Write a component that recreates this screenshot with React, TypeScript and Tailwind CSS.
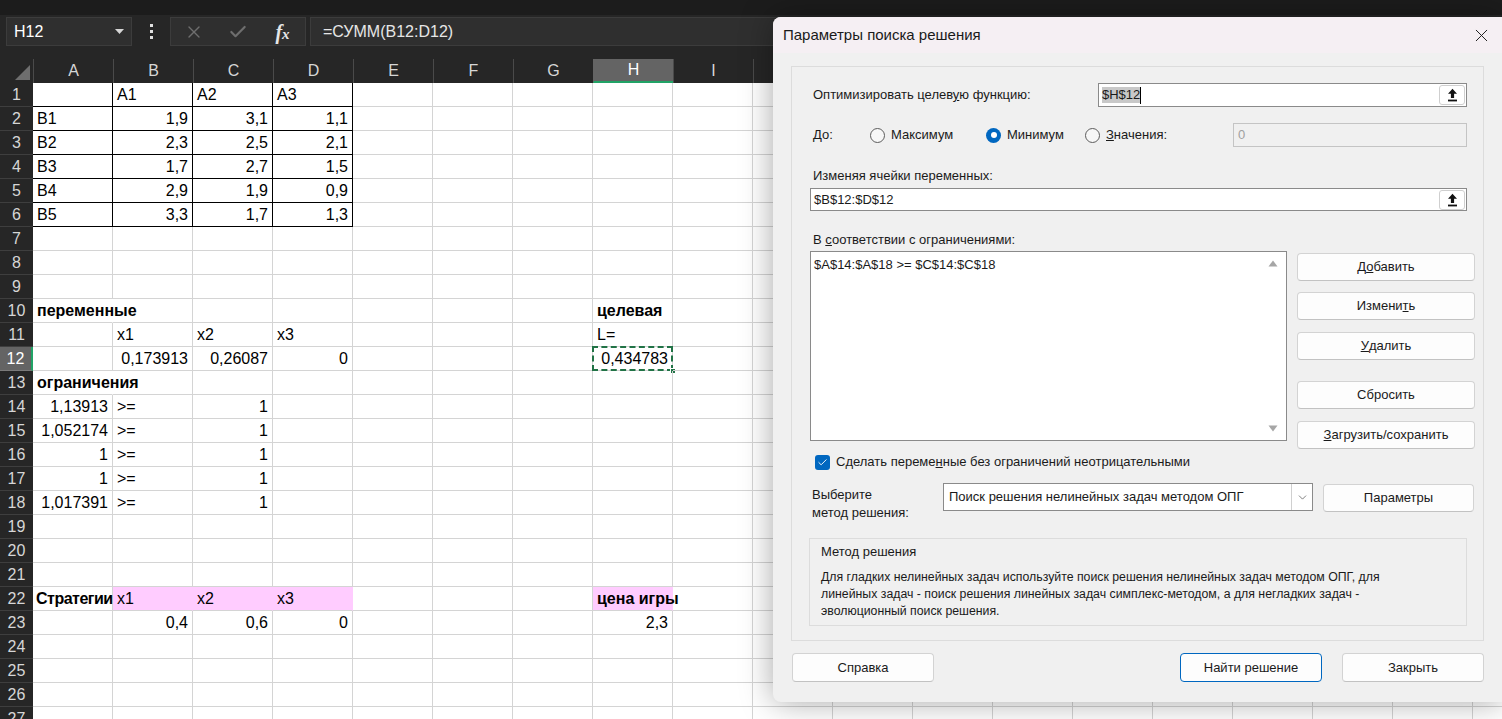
import React from 'react'
import { X, Check, ChevronDown } from 'lucide-react'

const COLS = 'ABCDEFGHIJKLMNOPQRS'.split('')
const ROWS = 27

type Cell = { v: string; right?: boolean; bold?: boolean; pink?: boolean; spill?: boolean; tight?: boolean }

const cells: Record<string, Cell> = {
  B1: { v: 'A1' }, C1: { v: 'A2' }, D1: { v: 'A3' },
  A2: { v: 'B1' }, B2: { v: '1,9', right: true }, C2: { v: '3,1', right: true }, D2: { v: '1,1', right: true },
  A3: { v: 'B2' }, B3: { v: '2,3', right: true }, C3: { v: '2,5', right: true }, D3: { v: '2,1', right: true },
  A4: { v: 'B3' }, B4: { v: '1,7', right: true }, C4: { v: '2,7', right: true }, D4: { v: '1,5', right: true },
  A5: { v: 'B4' }, B5: { v: '2,9', right: true }, C5: { v: '1,9', right: true }, D5: { v: '0,9', right: true },
  A6: { v: 'B5' }, B6: { v: '3,3', right: true }, C6: { v: '1,7', right: true }, D6: { v: '1,3', right: true },
  A10: { v: 'переменные', bold: true, spill: true }, H10: { v: 'целевая', bold: true },
  B11: { v: 'x1' }, C11: { v: 'x2' }, D11: { v: 'x3' }, H11: { v: 'L=' },
  B12: { v: '0,173913', right: true }, C12: { v: '0,26087', right: true }, D12: { v: '0', right: true },
  H12: { v: '0,434783', right: true },
  A13: { v: 'ограничения', bold: true, spill: true },
  A14: { v: '1,13913', right: true }, B14: { v: '>=' }, C14: { v: '1', right: true },
  A15: { v: '1,052174', right: true }, B15: { v: '>=' }, C15: { v: '1', right: true },
  A16: { v: '1', right: true }, B16: { v: '>=' }, C16: { v: '1', right: true },
  A17: { v: '1', right: true }, B17: { v: '>=' }, C17: { v: '1', right: true },
  A18: { v: '1,017391', right: true }, B18: { v: '>=' }, C18: { v: '1', right: true },
  A22: { v: 'Стратегии', bold: true, tight: true },
  B22: { v: 'x1', pink: true }, C22: { v: 'x2', pink: true }, D22: { v: 'x3', pink: true },
  H22: { v: 'цена игры', bold: true, pink: true },
  B23: { v: '0,4', right: true }, C23: { v: '0,6', right: true }, D23: { v: '0', right: true },
  H23: { v: '2,3', right: true },
}

function GridCell({ col, row }: { col: string; row: number }) {
  const c = cells[col + row]
  const ci = COLS.indexOf(col)
  const boxed = row <= 6 && ci <= 3
  let cls = 'border-r border-b border-[#d4d4d4]'
  if (boxed) cls = 'border-r border-b border-black'
  else if (c?.pink) cls = 'border-r border-b border-b-[#d4d4d4] border-r-[#ffccff] bg-[#ffccff]'
  else if (c?.spill) cls = 'border-r border-b border-b-[#d4d4d4] border-r-transparent'
  const selected = col === 'H' && row === 12
  return (
    <div
      className={`relative w-[80px] h-[24px] shrink-0 leading-[23px] whitespace-nowrap text-[16px] text-black ${cls} ${
        c?.right ? 'text-right' : 'text-left'
      } ${c?.bold ? 'font-bold' : ''} ${c?.tight ? 'pl-[3px] pr-0 tracking-[-0.5px] z-10' : 'px-[4px]'}`}
    >
      {c?.v}
      {selected && (
        <>
          <div className="absolute -left-[1px] -top-[1px] -right-[1px] -bottom-[1px] border-2 border-dashed border-[#217346] pointer-events-none" />
          <div className="absolute -right-[4px] -bottom-[4px] w-[6px] h-[6px] bg-[#217346] border border-white" />
        </>
      )}
    </div>
  )
}

function UploadBtn() {
  return (
    <div className="w-[26px] h-[20px] mr-[1px] bg-white border border-[#cfcfcf] rounded-[3px] flex items-center justify-center">
      <svg width="11" height="14" viewBox="0 0 11 14">
        <path d="M5.5 0.8 L1 5.8 H3.9 V10 H7.1 V5.8 H10 Z" fill="#111" />
        <rect x="1" y="11.6" width="9" height="1.8" fill="#111" />
      </svg>
    </div>
  )
}

function Radio({ checked, children, w }: { checked?: boolean; children: React.ReactNode; w: string }) {
  return (
    <div className={`flex items-center gap-[6px] ${w}`}>
      {checked ? (
        <span className="w-[15px] h-[15px] rounded-full bg-[#0067c0] flex items-center justify-center">
          <span className="w-[6px] h-[6px] rounded-full bg-white" />
        </span>
      ) : (
        <span className="w-[15px] h-[15px] rounded-full border border-[#5c5c5c] bg-[#f7f7f7]" />
      )}
      <span>{children}</span>
    </div>
  )
}

function Btn({ children, className = '', primary }: { children: React.ReactNode; className?: string; primary?: boolean }) {
  return (
    <div
      className={`h-[28px] flex items-center justify-center rounded-[4px] bg-[#fdfdfd] border ${
        primary ? 'border-[#0067c0]' : 'border-[#d3d3d3] border-b-[#c2c2c2]'
      } ${className}`}
    >
      {children}
    </div>
  )
}

function SolverDialog() {
  return (
    <div className="absolute left-[773px] top-[17px] w-[729px] h-[685px] rounded-tl-[8px] rounded-bl-[8px] bg-[#f0f0f0] shadow-[0_0_32px_rgba(0,0,0,0.35)] flex flex-col text-[13px] text-[#1a1a1a] font-['Liberation_Sans',sans-serif]">
      <div className="h-[36px] shrink-0 flex items-center justify-between pl-[10px] pr-[10px] rounded-tl-[8px] bg-[#f5eff3] text-[15px]">
        <span>Параметры поиска решения</span>
        <X size={21} strokeWidth={1.1} color="#1a1a1a" />
      </div>

      <div className="px-[18px] pt-[13px]">
        <div className="w-[693px] h-[575px] border border-[#dcdcdc] pl-[21px] flex flex-col">
          {/* target cell */}
          <div className="mt-[16px] h-[24px] flex items-center">
            <span className="w-[285px]">
              Оптимизировать целев<u>у</u>ю функцию:
            </span>
            <div className="w-[369px] h-[24px] bg-white border border-[#8a8a8a] flex items-center justify-between pl-[3px]">
              <span className="flex items-center">
                <span className="bg-[#c8c8c8] leading-[16px]">$H$12</span>
                <span className="w-[1px] h-[17px] bg-black" />
              </span>
              <UploadBtn />
            </div>
          </div>

          {/* to */}
          <div className="mt-[16px] h-[24px] flex items-center">
            <span className="w-[57px]">До:</span>
            <Radio w="w-[116px]">Максимум</Radio>
            <Radio w="w-[99px]" checked>
              Минимум
            </Radio>
            <Radio w="w-[148px]">
              <u>З</u>начения:
            </Radio>
            <div className="w-[234px] h-[24px] border border-[#c4c4c4] bg-[#f0f0f0] flex items-center pl-[4px] text-[#a0a0a0]">
              0
            </div>
          </div>

          {/* variables */}
          <div className="mt-[21px] leading-[16px]">Изменяя ячейки переменных:</div>
          <div className="mt-[4px] -ml-[3px] w-[657px] h-[23px] bg-white border border-[#8a8a8a] flex items-center justify-between pl-[3px]">
            <span>$B$12:$D$12</span>
            <UploadBtn />
          </div>

          {/* constraints */}
          <div className="mt-[21px] leading-[16px]">
            В <u>с</u>оответствии с ограничениями:
          </div>
          <div className="mt-[3px] -ml-[3px] flex">
            <div className="relative w-[477px] h-[190px] bg-white border border-[#8a8a8a] pl-[3px] pt-[3px]">
              <span>$A$14:$A$18 &gt;= $C$14:$C$18</span>
              <svg className="absolute right-[8px] top-[8px]" width="10" height="7" viewBox="0 0 10 7">
                <path d="M5 0.5 L9.5 6.5 H0.5 Z" fill="#a6a6a6" />
              </svg>
              <svg className="absolute right-[8px] bottom-[8px]" width="10" height="7" viewBox="0 0 10 7">
                <path d="M0.5 0.5 H9.5 L5 6.5 Z" fill="#a6a6a6" />
              </svg>
            </div>
            <div className="ml-[10px] pt-[2px] w-[178px] flex flex-col">
              <Btn>
                Д<u>о</u>бавить
              </Btn>
              <Btn className="mt-[11px]">
                Измени<u>т</u>ь
              </Btn>
              <Btn className="mt-[12px]">
                <u>У</u>далить
              </Btn>
              <Btn className="mt-[21px]">Сбросить</Btn>
              <Btn className="mt-[12px]">
                <u>З</u>агрузить/сохранить
              </Btn>
            </div>
          </div>

          {/* non-negative */}
          <div className="mt-[5px] h-[16px] flex items-center gap-[6px] pl-[2px]">
            <span className="w-[15px] h-[15px] rounded-[3px] bg-[#0067c0] flex items-center justify-center">
              <Check size={11} strokeWidth={2} color="#fff" />
            </span>
            <span>
              Сделать переме<u>н</u>ные без ограничений неотрицательными
            </span>
          </div>

          {/* method */}
          <div className="mt-[13px] flex items-start">
            <div className="w-[131px] -ml-[1px] pt-[3px] leading-[18px]">
              Выберите
              <br />
              метод решения:
            </div>
            <div className="w-[370px] h-[28px] bg-white border border-[#8a8a8a] flex items-center justify-between pl-[5px]">
              <span>Поиск решения нелинейных задач методом ОПГ</span>
              <div className="h-full flex items-center border-l border-[#d0d0d0] w-[21px] justify-center">
                <ChevronDown size={13} strokeWidth={1.25} color="#444" />
              </div>
            </div>
            <Btn className="ml-[10px] mt-[1px] w-[151px]">Параметры</Btn>
          </div>

          <div className="mt-[16px] -ml-[4px] w-[658px] h-[88px] border border-[#dcdcdc] pl-[11px] pt-[4px] leading-[17px]">
            <div>Метод решения</div>
            <div className="mt-[9px] whitespace-nowrap text-[12.3px]">
              Для гладких нелинейных задач используйте поиск решения нелинейных задач методом ОПГ, для
              <br />
              линейных задач - поиск решения линейных задач симплекс-методом, а для негладких задач -
              <br />
              эволюционный поиск решения.
            </div>
          </div>
        </div>

        <div className="mt-[12px] flex">
          <Btn className="ml-[1px] w-[142px] h-[29px]">Справка</Btn>
          <Btn primary className="ml-[246px] w-[142px] h-[29px]">
            Найти решение
          </Btn>
          <Btn className="ml-[20px] w-[142px] h-[29px]">Закрыть</Btn>
        </div>
      </div>
    </div>
  )
}

export default function App() {
  return (
    <div className="relative w-[1502px] h-[719px] overflow-hidden bg-white font-['Liberation_Sans',sans-serif]">
      {/* window top strip */}
      <div className="h-[15px] bg-[#1c1c1c]" />

      {/* formula bar */}
      <div className="h-[44px] bg-[#262626] flex items-start pt-[2px] pl-[6px] text-[16px]">
        <div className="w-[126px] h-[29px] bg-[#2f2f2f] border border-[#3c3c3c] flex items-center justify-between pl-[7px] pr-[7px] text-white">
          <span>H12</span>
          <svg width="9" height="5" viewBox="0 0 9 5">
            <path d="M0 0 H9 L4.5 5 Z" fill="#d6d6d6" />
          </svg>
        </div>
        <div className="w-[38px] h-[29px] flex flex-col items-center justify-center gap-[3px]">
          <span className="w-[3px] h-[3px] bg-[#e0e0e0]" />
          <span className="w-[3px] h-[3px] bg-[#e0e0e0]" />
          <span className="w-[3px] h-[3px] bg-[#e0e0e0]" />
        </div>
        <div className="w-[136px] h-[29px] bg-[#2f2f2f] border border-[#3c3c3c] flex items-center">
          <div className="w-[45px] flex justify-center">
            <X size={20} strokeWidth={1.6} color="#6e6e6e" />
          </div>
          <div className="w-[44px] flex justify-center">
            <Check size={20} strokeWidth={2.6} color="#6e6e6e" />
          </div>
          <div className="w-[45px] flex items-baseline justify-center text-[#e6e6e6] italic font-bold font-['Liberation_Serif',serif]">
            <span className="text-[20px]">f</span>
            <span className="text-[15px]">x</span>
          </div>
        </div>
        <div className="ml-[4px] flex-1 h-[29px] bg-[#2f2f2f] border border-[#3c3c3c] flex items-center pl-[12px] text-[#e6e6e6]">
          =СУММ(B12:D12)
        </div>
      </div>

      {/* column headers */}
      <div className="h-[24px] flex bg-[#262626] text-[16px] text-[#d6d6d6]">
        <div className="relative w-[33px] shrink-0">
          <svg className="absolute right-[3px] bottom-[3px]" width="15" height="15" viewBox="0 0 15 15">
            <path d="M15 0 V15 H0 Z" fill="#6e6e6e" />
          </svg>
        </div>
        {COLS.map((c) => (
          <div
            key={c}
            className={`w-[80px] shrink-0 flex items-center justify-center border-l ${
              c === 'H' ? 'bg-[#646464] border-[#646464] text-white border-b-2 border-b-[#21a366]' : 'border-[#4a4a4a]'
            }`}
          >
            {c}
          </div>
        ))}
      </div>

      {/* rows */}
      {Array.from({ length: ROWS }, (_, i) => i + 1).map((r) => (
        <div key={r} className="flex h-[24px]">
          <div
            className={`w-[33px] shrink-0 flex items-center justify-center border-b text-[16px] ${
              r === 12
                ? 'bg-[#646464] border-[#7a7a7a] text-white border-r-2 border-r-[#21a366]'
                : 'bg-[#262626] border-[#3e3e3e] text-[#d6d6d6]'
            }`}
          >
            {r}
          </div>
          {COLS.map((c) => (
            <GridCell key={c} col={c} row={r} />
          ))}
        </div>
      ))}

      <SolverDialog />
    </div>
  )
}
